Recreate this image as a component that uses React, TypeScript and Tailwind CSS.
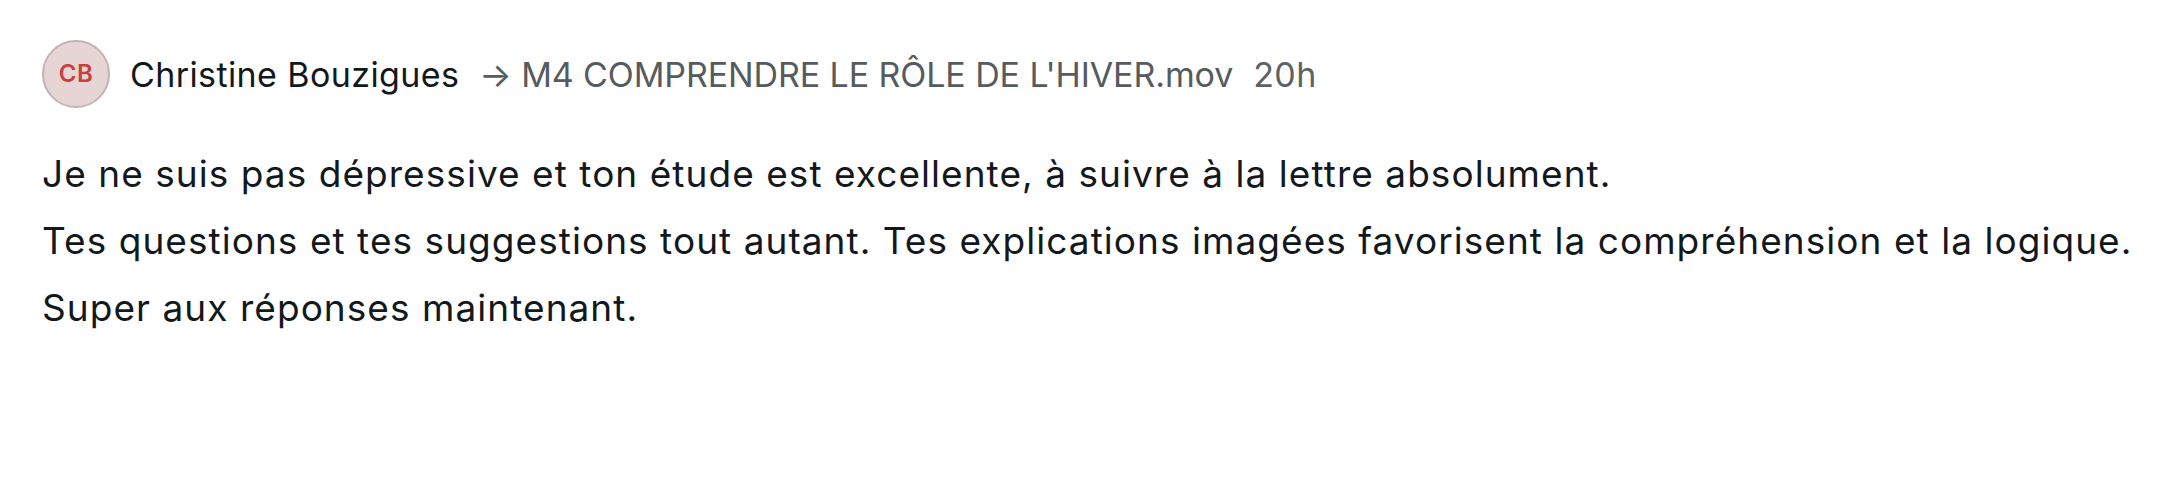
import React from "react";

const comment = {
  initials: "CB",
  author: "Christine Bouzigues",
  target: "M4 COMPRENDRE LE RÔLE DE L'HIVER.mov",
  time: "20h",
  lines: [
    "Je ne suis pas dépressive et ton étude est excellente, à suivre à la lettre absolument.",
    "Tes questions et tes suggestions tout autant. Tes explications imagées favorisent la compréhension et la logique.",
    "Super aux réponses maintenant.",
  ],
};

export default function App() {
  return (
    <div
      className="w-[2176px] h-[488px] bg-white pl-[42px] pt-[40px]"
      style={{ fontFamily: "Inter, 'Noto Sans', sans-serif" }}
    >
      {/* Header */}
      <div className="flex items-center">
        <div className="flex h-[68px] w-[68px] shrink-0 items-center justify-center rounded-full border-2 border-[#c4b3b4] bg-[#e7d5d6] text-[24px] font-semibold tracking-[0.5px] text-[#c9403d]">
          {comment.initials}
        </div>
        <span className="ml-[20px] text-[34px] tracking-[0.4px] text-[#13181c]">
          {comment.author}
        </span>
        <span className="ml-[20px] text-[34px] tracking-[-0.1px] text-[#555b5e]">
          → {comment.target}
        </span>
        <span className="ml-[20px] text-[34px] tracking-[0.4px] text-[#5c6265]">
          {comment.time}
        </span>
      </div>

      {/* Body */}
      <div className="mt-[32px] text-[37px] leading-[67px] tracking-[1.05px] text-[#13181c]">
        {comment.lines.map((line, i) => (
          <p key={i}>{line}</p>
        ))}
      </div>
    </div>
  );
}
